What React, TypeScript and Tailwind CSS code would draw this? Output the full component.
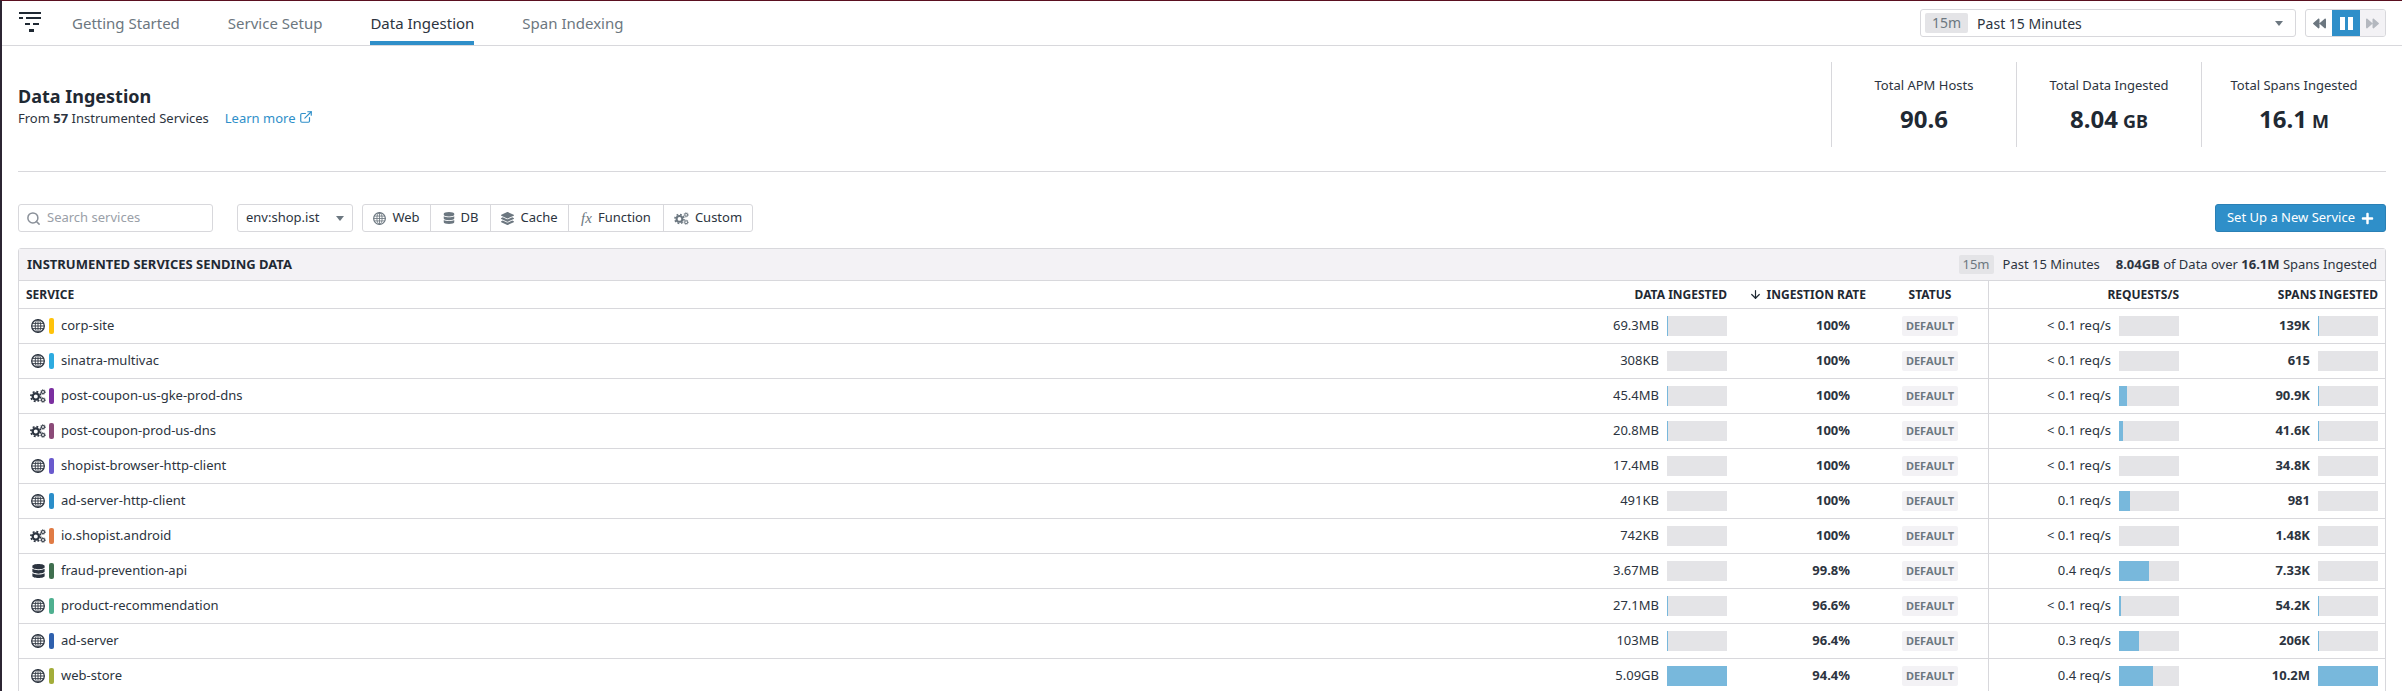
import React from 'react';
import { Search, ExternalLink, ArrowDown } from 'lucide-react';
import { FaDatabase, FaLayerGroup, FaPlus, FaBackward, FaForward } from 'react-icons/fa';

type Kind = 'web' | 'custom' | 'db';

interface Row {
  name: string;
  kind: Kind;
  color: string;
  data: string;
  dataPct: number;
  rate: string;
  req: string;
  reqPct: number;
  spans: string;
  spansPct: number;
}

const rows: Row[] = [
  { name: 'corp-site', kind: 'web', color: '#ffc30b', data: '69.3MB', dataPct: 1, rate: '100%', req: '< 0.1 req/s', reqPct: 0, spans: '139K', spansPct: 1 },
  { name: 'sinatra-multivac', kind: 'web', color: '#2dabe0', data: '308KB', dataPct: 0, rate: '100%', req: '< 0.1 req/s', reqPct: 0, spans: '615', spansPct: 0 },
  { name: 'post-coupon-us-gke-prod-dns', kind: 'custom', color: '#7b2fa0', data: '45.4MB', dataPct: 1, rate: '100%', req: '< 0.1 req/s', reqPct: 13, spans: '90.9K', spansPct: 1 },
  { name: 'post-coupon-prod-us-dns', kind: 'custom', color: '#8b4a78', data: '20.8MB', dataPct: 0.5, rate: '100%', req: '< 0.1 req/s', reqPct: 6, spans: '41.6K', spansPct: 0.5 },
  { name: 'shopist-browser-http-client', kind: 'web', color: '#6a5acd', data: '17.4MB', dataPct: 0, rate: '100%', req: '< 0.1 req/s', reqPct: 0, spans: '34.8K', spansPct: 0 },
  { name: 'ad-server-http-client', kind: 'web', color: '#2b8ec9', data: '491KB', dataPct: 0, rate: '100%', req: '0.1 req/s', reqPct: 19, spans: '981', spansPct: 0 },
  { name: 'io.shopist.android', kind: 'custom', color: '#e07b45', data: '742KB', dataPct: 0, rate: '100%', req: '< 0.1 req/s', reqPct: 0, spans: '1.48K', spansPct: 0 },
  { name: 'fraud-prevention-api', kind: 'db', color: '#3f6f4f', data: '3.67MB', dataPct: 0, rate: '99.8%', req: '0.4 req/s', reqPct: 50, spans: '7.33K', spansPct: 0 },
  { name: 'product-recommendation', kind: 'web', color: '#4fb090', data: '27.1MB', dataPct: 0.5, rate: '96.6%', req: '< 0.1 req/s', reqPct: 3, spans: '54.2K', spansPct: 0.5 },
  { name: 'ad-server', kind: 'web', color: '#2f60ad', data: '103MB', dataPct: 1.5, rate: '96.4%', req: '0.3 req/s', reqPct: 34, spans: '206K', spansPct: 1.5 },
  { name: 'web-store', kind: 'web', color: '#a3ad3a', data: '5.09GB', dataPct: 100, rate: '94.4%', req: '0.4 req/s', reqPct: 57, spans: '10.2M', spansPct: 100 },
];

const GlobeIcon = ({ className = '' }: { className?: string }) => (
  <svg viewBox="0 0 14 14" className={className} fill="none" stroke="currentColor" strokeWidth="0.9">
    <circle cx="7" cy="7" r="6.3" strokeWidth="1.3" />
    <ellipse cx="7" cy="7" rx="2.8" ry="6.3" />
    <path d="M7 .7v12.6M1.2 4.4h11.6M.7 7h12.6M1.2 9.6h11.6" />
  </svg>
);

// one big gear on the left, two small ones stacked on the right
const GearsIcon = ({ className = '' }: { className?: string }) => (
  <svg viewBox="0 0 16 14" className={className} fill="none" stroke="currentColor">
    <circle cx="5.8" cy="7.5" r="3.1" strokeWidth="2.2" />
    <circle cx="5.8" cy="7.5" r="4.9" strokeWidth="1.7" strokeDasharray="1.9 1.95" />
    <circle cx="13" cy="3" r="1.5" strokeWidth="1.1" />
    <circle cx="13" cy="3" r="2.4" strokeWidth="0.8" strokeDasharray="1 0.88" />
    <circle cx="13" cy="11" r="1.5" strokeWidth="1.1" />
    <circle cx="13" cy="11" r="2.4" strokeWidth="0.8" strokeDasharray="1 0.88" />
  </svg>
);

const Logo = () => (
  <svg width="24" height="22" viewBox="0 0 24 22" fill="#1f2933" className="shrink-0">
    <rect x="1" y="0" width="22" height="2" />
    <rect x="1" y="5" width="4" height="2" />
    <rect x="8" y="5" width="15" height="2" />
    <rect x="7" y="11" width="5" height="2" />
    <rect x="15" y="11" width="6" height="2" />
    <rect x="11" y="17" width="5" height="3" />
  </svg>
);

const KindIcon = ({ kind }: { kind: Kind }) => {
  if (kind === 'custom') return <GearsIcon className="w-[16px] h-[14px] text-[#2c3440]" />;
  if (kind === 'db') return <FaDatabase className="w-[13px] h-[14px] text-[#2c3440]" />;
  return <GlobeIcon className="w-[14px] h-[14px] text-[#2c3440]" />;
};

const Bar = ({ pct }: { pct: number }) => (
  <div className="w-[60px] h-[20px] bg-[#e4e4e7] shrink-0">
    {pct > 0 && <div className="h-full bg-[#78b8dc]" style={{ width: `${pct}%` }} />}
  </div>
);

const Stat = ({ label, value, unit }: { label: string; value: string; unit?: string }) => (
  <div className="w-[185px] h-[85px] border-l border-[#d8d8dc] flex flex-col items-center pt-[14px]">
    <div className="text-[13px] leading-[18px] text-[#2c3440]">{label}</div>
    <div className="mt-[10px] text-[24px] leading-[30px] font-bold text-[#1f2933]">
      {value}
      {unit && <span className="ml-[5px] text-[18px]">{unit}</span>}
    </div>
  </div>
);

const FilterButton = ({ icon, label, width }: { icon: React.ReactNode; label: string; width: string }) => (
  <div className={`${width} h-full flex items-center justify-center gap-[6px] border-r border-[#d8d8dc] last:border-r-0 text-[13px] text-[#2c3440]`}>
    <span className="text-[#6c7780] flex items-center">{icon}</span>
    {label}
  </div>
);

const gridCols = 'grid grid-cols-[1fr_135px_137px_117px_198px_198px]';

export default function App() {
  return (
    <div className="h-[691px] overflow-hidden bg-white border-t border-l-2 border-t-[#5a1020] border-l-[#2c2533] font-['Noto_Sans',sans-serif] text-[#2c3440]">
      {/* Top nav */}
      <div className="h-[45px] border-b border-[#d8d8dc] flex items-center pl-[16px] pr-[16px]">
        <Logo />
        <nav className="flex h-full ml-[30px] gap-[48px] text-[15px]">
          {['Getting Started', 'Service Setup', 'Data Ingestion', 'Span Indexing'].map((t) => (
            <div
              key={t}
              className={
                t === 'Data Ingestion'
                  ? 'h-full flex items-center border-b-4 border-[#2f8fc9] text-[#2c3440] pt-[4px]'
                  : 'h-full flex items-center text-[#6c7780]'
              }
            >
              {t}
            </div>
          ))}
        </nav>
        <div className="ml-auto flex items-center gap-[9px]">
          <div className="w-[376px] h-[28px] border border-[#d8d8dc] rounded-[3px] flex items-center pl-[4px] pr-[12px] text-[14px]">
            <span className="bg-[#e4e4e7] text-[#6c7780] rounded-[2px] px-[7px] h-[20px] leading-[20px]">15m</span>
            <span className="ml-[9px]">Past 15 Minutes</span>
            <span className="ml-auto w-0 h-0 border-x-[4px] border-x-transparent border-t-[5px] border-t-[#6c7780]" />
          </div>
          <div className="w-[81px] h-[28px] border border-[#d8d8dc] rounded-[3px] flex overflow-hidden">
            <div className="w-[26px] flex items-center justify-center text-[#6c7780]">
              <FaBackward size={13} />
            </div>
            <div className="w-[28px] bg-[#2f8fc9] flex items-center justify-center gap-[3px]">
              <span className="w-[5px] h-[13px] bg-white" />
              <span className="w-[5px] h-[13px] bg-white" />
            </div>
            <div className="flex-1 bg-[#f3f2f5] flex items-center justify-center text-[#b4b8bf]">
              <FaForward size={13} />
            </div>
          </div>
        </div>
      </div>

      {/* Page header */}
      <div className="mx-[16px] h-[126px] pt-[16px] border-b border-[#d8d8dc] flex justify-between">
        <div className="pt-[21px]">
          <h1 className="text-[18px] leading-[26px] font-bold text-[#1f2933]">Data Ingestion</h1>
          <div className="text-[13px] leading-[18px] flex items-center">
            <span>
              From <b className="font-bold">57</b> Instrumented Services
            </span>
            <span className="ml-[16px] text-[#2f8fc9] flex items-center gap-[3px]">
              Learn more
              <ExternalLink size={14} className="-mt-[3px]" />
            </span>
          </div>
        </div>
        <div className="flex">
          <Stat label="Total APM Hosts" value="90.6" />
          <Stat label="Total Data Ingested" value="8.04" unit="GB" />
          <Stat label="Total Spans Ingested" value="16.1" unit="M" />
        </div>
      </div>

      {/* Toolbar */}
      <div className="mx-[16px] mt-[32px] h-[28px] flex items-center text-[13px]">
        <div className="w-[195px] h-full border border-[#d8d8dc] rounded-[3px] flex items-center px-[7px] text-[#9aa0a8]">
          <Search size={15} strokeWidth={2.4} className="text-[#8a9099]" />
          <span className="ml-[6px]">Search services</span>
        </div>
        <div className="ml-[24px] w-[116px] h-full border border-[#d8d8dc] rounded-[3px] flex items-center pl-[8px] pr-[8px]">
          env:shop.ist
          <span className="ml-auto w-0 h-0 border-x-[4px] border-x-transparent border-t-[5px] border-t-[#6c7780]" />
        </div>
        <div className="ml-[9px] h-full border border-[#d8d8dc] rounded-[3px] flex items-center">
          <FilterButton width="w-[68px]" label="Web" icon={<GlobeIcon className="w-[13px] h-[13px]" />} />
          <FilterButton width="w-[60px]" label="DB" icon={<FaDatabase size={12} />} />
          <FilterButton width="w-[78px]" label="Cache" icon={<FaLayerGroup size={13} />} />
          <FilterButton
            width="w-[95px]"
            label="Function"
            icon={<span className="font-['Liberation_Serif',serif] italic text-[15px] leading-none">fx</span>}
          />
          <FilterButton width="w-[88px]" label="Custom" icon={<GearsIcon className="w-[15px] h-[13px]" />} />
        </div>
        <div className="ml-auto w-[171px] h-full bg-[#2f8fc9] rounded-[3px] border border-[#2a80b5] flex items-center justify-center gap-[6px] text-white">
          Set Up a New Service
          <FaPlus size={13} />
        </div>
      </div>

      {/* Table */}
      <div className="mx-[16px] mt-[16px] border border-[#d8d8dc] rounded-t-[3px]">
        <div className="h-[32px] bg-[#f3f2f5] border-b border-[#d8d8dc] flex items-center pl-[8px] pr-[8px]">
          <span className="text-[13px] font-bold text-[#1f2933]">INSTRUMENTED SERVICES SENDING DATA</span>
          <div className="ml-auto flex items-center text-[13px]">
            <span className="bg-[#e4e4e7] text-[#6c7780] rounded-[2px] px-[4px] h-[19px] leading-[19px]">15m</span>
            <span className="ml-[9px]">Past 15 Minutes</span>
            <span className="ml-[16px]">
              <b className="font-bold">8.04GB</b> of Data over <b className="font-bold">16.1M</b> Spans Ingested
            </span>
          </div>
        </div>
        <div className={`${gridCols} h-[28px] border-b border-[#d8d8dc] items-center text-[12px] font-bold text-[#1f2933]`}>
          <div className="pl-[7px]">SERVICE</div>
          <div className="text-right pr-[8px]">DATA INGESTED</div>
          <div className="flex items-center justify-end gap-[5px] pr-[6px]">
            <ArrowDown size={13} strokeWidth={2.2} />
            INGESTION RATE
          </div>
          <div className="h-full flex items-center justify-center border-r border-[#d8d8dc]">STATUS</div>
          <div className="text-right pr-[8px]">REQUESTS/S</div>
          <div className="text-right pr-[7px]">SPANS INGESTED</div>
        </div>
        {rows.map((r) => (
          <div key={r.name} className={`${gridCols} h-[35px] border-b border-[#d8d8dc] items-center text-[13px]`}>
            <div className="flex items-center pl-[11px]">
              <span className="w-[16px] flex justify-center">
                <KindIcon kind={r.kind} />
              </span>
              <span className="ml-[3px] w-[5px] h-[16px] rounded-[2px]" style={{ backgroundColor: r.color }} />
              <span className="ml-[7px]">{r.name}</span>
            </div>
            <div className="flex items-center justify-end gap-[8px] pr-[8px]">
              <span>{r.data}</span>
              <Bar pct={r.dataPct} />
            </div>
            <div className="text-right pr-[22px] font-bold">{r.rate}</div>
            <div className="h-full flex items-center justify-center border-r border-[#d8d8dc]">
              <span className="w-[56px] h-[20px] leading-[20px] text-center bg-[#f3f2f5] rounded-[2px] text-[11px] font-bold text-[#6c7780]">
                DEFAULT
              </span>
            </div>
            <div className="flex items-center justify-end gap-[8px] pr-[8px]">
              <span>{r.req}</span>
              <Bar pct={r.reqPct} />
            </div>
            <div className="flex items-center justify-end gap-[8px] pr-[7px]">
              <span className="font-bold">{r.spans}</span>
              <Bar pct={r.spansPct} />
            </div>
          </div>
        ))}
      </div>
    </div>
  );
}
